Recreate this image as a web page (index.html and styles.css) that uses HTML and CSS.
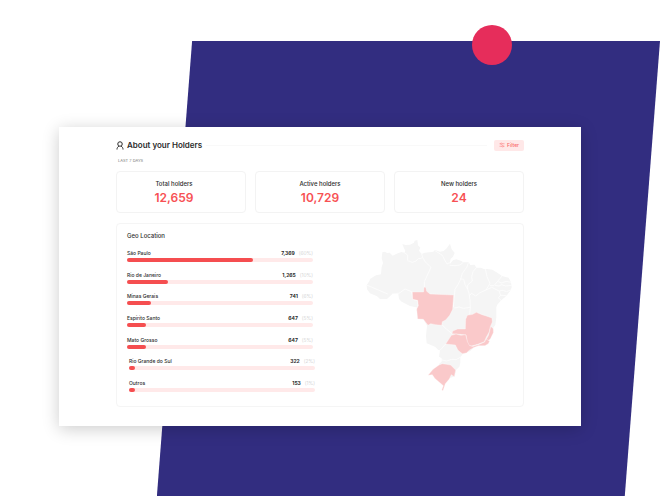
FILE: index.html
```html
<!DOCTYPE html>
<html lang="en">
<head>
    <meta charset="UTF-8">
    <meta name="viewport" content="width=device-width, initial-scale=1.0">
    <title>About your Holders</title>
    <link rel="stylesheet" href="styles.css">
</head>
<body>
    <main class="hero">
        <div class="shape"></div>
        <div class="dot"></div>
        <section class="panel">
            <header class="panel-header">
                <svg class="user-icon" viewBox="0 0 16 18" aria-hidden="true">
                    <circle cx="8" cy="6" r="4.5"/>
                    <path d="M2 17c0-3 1-5 4-7M14 17c0-3-1-5-4-7"/>
                </svg>
                <h1>About your Holders</h1>
                <span class="line"></span>
                <button type="button" class="filter">
                    <svg class="filter-icon" viewBox="0 0 12 12" aria-hidden="true">
                        <path d="M1 3.500h2M6 3.500h5M1 8.500h5M9 8.500h2"/>
                        <circle cx="4.500" cy="3.500" r="1.500"/>
                        <circle cx="7.500" cy="8.500" r="1.500"/>
                    </svg>
                    Filter
                </button>
            </header>
            <p class="period">LAST 7 DAYS</p>

            <div class="cards">
                <div class="card card-total">
                    <h2>Total holders</h2>
                    <strong>12,659</strong>
                </div>
                <div class="card">
                    <h2>Active holders</h2>
                    <strong>10,729</strong>
                </div>
                <div class="card">
                    <h2>New holders</h2>
                    <strong>24</strong>
                </div>
            </div>

            <div class="geo">
                <div class="geo-left">
                    <h2>Geo Location</h2>
                    <ul class="places">
                        <li>
                            <div class="place"><span class="name">São Paulo</span><b>7,369</b><span class="percent">(60%)</span></div>
                            <div class="bar"><div class="fill" style="width: 68%"></div></div>
                        </li>
                        <li>
                            <div class="place"><span class="name">Rio de Janeiro</span><b>1,265</b><span class="percent">(10%)</span></div>
                            <div class="bar"><div class="fill" style="width: 22%"></div></div>
                        </li>
                        <li>
                            <div class="place"><span class="name">Minas Gerais</span><b>741</b><span class="percent">(6%)</span></div>
                            <div class="bar"><div class="fill" style="width: 13%"></div></div>
                        </li>
                        <li>
                            <div class="place"><span class="name">Espírito Santo</span><b>647</b><span class="percent">(5%)</span></div>
                            <div class="bar"><div class="fill" style="width: 10%"></div></div>
                        </li>
                        <li>
                            <div class="place"><span class="name">Mato Grosso</span><b>647</b><span class="percent">(5%)</span></div>
                            <div class="bar"><div class="fill" style="width: 10%"></div></div>
                        </li>
                        <li class="minor">
                            <div class="place"><span class="name">Rio Grande do Sul</span><b>322</b><span class="percent">(2%)</span></div>
                            <div class="bar"><div class="fill" style="width: 3%"></div></div>
                        </li>
                        <li class="minor">
                            <div class="place"><span class="name">Outros</span><b>153</b><span class="percent">(1%)</span></div>
                            <div class="bar"><div class="fill" style="width: 3%"></div></div>
                        </li>
                    </ul>
                </div>
                <svg class="map" viewBox="9 6 480 480" role="img" aria-label="Map of Brazil">
                    <path class="country" d="M82 67L90 65 96 69 104 68 113 77 125 71 139 66 148 68 151 62 147 55 142 42 151 45 165 44 177 38 179 32 187 30 189 46 196 53 192 62 200 72 209 68 223 67 235 65 240 60 255 65 266 63 275 55 285 41 290 58 299 69 294 80 287 86 284 103 294 91 304 88 319 93 325 97 341 97 346 105 359 104 364 113 377 113 389 118 397 117 412 119 427 128 441 138 461 143 468 157 470 172 466 182 455 197 437 212 427 224 424 232 424 262 421 285 414 295 415 307 409 318 403 322 398 335 389 346 370 347 358 352 345 364 324 371 316 382 316 398 313 410 303 420 300 438 286 444 262 420 252 402 260 395 260 385 252 380 255 361 250 360 240 350 215 340 213 318 216 287 205 268 188 267 185 240 190 233 165 228 140 215 132 207 130 192 112 192 96 207 75 207 66 199 45 190 36 178 35 165 43 154 45 147 63 136 78 133 80 111 84 99 80 85z"/>
                    <g class="borders">
                        <!-- north -->
                        <path d="M148 68L158 75 158 92 172 97 183 93 190 86 198 85 203 82 200 72"/>
                        <path d="M203 82L210 95 228 112 208 155 208 172"/>
                        <path d="M35 165L98 192"/>
                        <path d="M112 192L132 190 150 177 170 185 173 208 188 211 190 233"/>
                        <path d="M240 62L262 76 269 90 276 102 284 98"/>
                        <path d="M284 106L300 107 315 105 325 97"/>
                        <path d="M341 97L335 112 322 130 317 147 310 162 300 178 298 196 295 232"/>
                        <!-- northeast -->
                        <path d="M317 147L326 148 330 163 338 178 342 190 345 210 346 232"/>
                        <path d="M364 113L354 125 350 140 352 153 338 165 338 178"/>
                        <path d="M391 117L396 140 405 160 393 180 375 188 362 198 350 190 343 197"/>
                        <path d="M405 167L417 167 427 155 441 138"/>
                        <path d="M430 155L440 159 453 154 468 157"/>
                        <path d="M420 166L432 168 440 164 452 168 470 166"/>
                        <path d="M393 180L410 172 432 183 445 181 454 185 467 180"/>
                        <path d="M432 183L437 196 455 197M437 196L430 203 440 213"/>
                        <!-- centre and south -->
                        <path d="M298 234L312 231 325 235 346 232 344 255 334 266"/>
                        <path d="M262 285L275 298 290 310"/>
                        <path d="M255 361L272 342"/>
                        <path d="M256 389L275 393 290 388 303 389 316 382"/>
                    </g>
                    <!-- states with holders -->
                    <g class="active">
                        <path d="M172 186L206 186 207 172 212 172 215 184 225 192 296 195 293 238 284 256 272 270 262 275 260 286 242 284 227 281 219 286 213 278 205 268 188 267 185 237 190 227 188 211 173 208z"/>
                        <path d="M332 268L337 256 353 253 364 247 381 254 391 257 411 264 412 276 406 290 403 305 394 321 388 335 368 343 350 348 338 345 333 315 315 313 291 311 293 303 308 297 331 297z"/>
                        <path d="M407 289L415 296 415 308 406 327 401 331 392 331 400 317 404 304z"/>
                        <path d="M347 350L370 344 389 336 393 327 404 333 400 341 390 347 371 347 358 352z"/>
                        <path d="M272 342L289 316 303 312 318 316 332 314 337 334 343 346 358 352 344 360 334 369 322 371 309 361 301 345z"/>
                        <path d="M219 436L234 418 252 405 262 401 274 403 287 405 302 420 298 440 289 434 283 447 271 461 264 482 260 480 265 467 252 456 239 445 232 434z"/>
                    </g>
                </svg>
            </div>
        </section>
    </main>
</body>
</html>
```
FILE: styles.css
```css
* {
    box-sizing: border-box;
}
body {
    margin: 0;
    background: #fff;
    color: #2b2b2b;
    font-family: "Inter", "Liberation Sans", sans-serif;
}
h1, h2, p, ul {
    margin: 0;
    padding: 0;
}
.hero {
    position: relative;
    min-height: 100vh;
    padding: 127px 81px 70px 59px;
    overflow: hidden;
}

/* decoration behind the panel */
.shape {
    position: absolute;
    top: 41px;
    right: 2px;
    bottom: 0;
    width: 76%;
    background: #322d80;
    clip-path: polygon(7% 0, 100% 0, 93% 100%, 0 100%);
}
.dot {
    position: absolute;
    top: 25px;
    right: 150px;
    width: 40px;
    height: 40px;
    border-radius: 50%;
    background: #e62d5b;
}

.panel {
    position: relative;
    padding: 12px 57px 19px;
    background: #fff;
    box-shadow: 0 3px 16px rgba(0, 0, 0, 0.2);
}
.panel-header {
    display: flex;
    align-items: center;
    height: 12px;
}
.user-icon {
    width: 8px;
    height: 9px;
    margin-right: 3px;
    fill: none;
    stroke: #2b2b2b;
    stroke-width: 2;
}
h1 {
    font-size: 8px;
    line-height: 12px;
    font-weight: 600;
}
.line {
    flex: 1;
    height: 1px;
    margin: 0 7px 0 4px;
    background: #f9f9f9;
}
.filter {
    display: flex;
    align-items: center;
    justify-content: center;
    gap: 2px;
    width: 30px;
    height: 11px;
    padding: 0;
    border: 0;
    border-radius: 2px;
    background: #ffe8e8;
    color: #f9696b;
    font-family: inherit;
    font-size: 5px;
    font-weight: 500;
}
.filter-icon {
    width: 6px;
    height: 6px;
    fill: none;
    stroke: #f9696b;
}
.period {
    margin: 7px 0 7px 2px;
    font-size: 4px;
    line-height: 6px;
    color: #777;
}

.cards {
    display: grid;
    grid-template-columns: repeat(3, 1fr);
    gap: 9px;
}
.card {
    padding: 7px 0 6px;
    border: 1px solid #f3f3f3;
    border-radius: 4px;
    text-align: center;
}
.card-total {
    padding-right: 14px;
}
.card h2 {
    font-size: 6px;
    line-height: 10px;
    font-weight: 500;
}
.card strong {
    display: block;
    font-size: 12px;
    line-height: 17px;
    font-weight: 600;
    color: #f75154;
}

.geo {
    display: grid;
    grid-template-columns: 1fr 160px;
    gap: 45px;
    margin-top: 10px;
    padding: 8px 5px 14px 10px;
    border: 1px solid #f5f5f5;
    border-radius: 4px;
}
.geo-left {
    display: flex;
    flex-direction: column;
}
.geo h2 {
    font-size: 6px;
    line-height: 8px;
    font-weight: 500;
}
.places {
    display: flex;
    flex: 1;
    flex-direction: column;
    justify-content: space-between;
    margin-top: 9px;
    list-style: none;
}
.minor {
    margin: 0 -2px 0 2px;
}
.place {
    display: flex;
    gap: 4px;
    margin-bottom: 1px;
    font-size: 5px;
    line-height: 8px;
    font-weight: 500;
}
.name {
    flex: 1;
}
.place b {
    font-weight: 700;
}
.percent {
    color: #c8c8c8;
    font-weight: 300;
}
.bar {
    height: 4px;
    border-radius: 2px;
    background: #ffe9e9;
}
.fill {
    height: 4px;
    border-radius: 2px;
    background: #f54e50;
}

.map {
    width: 160px;
    height: 160px;
    stroke-linejoin: round;
}
.country {
    fill: #f5f5f5;
}
.borders {
    fill: none;
    stroke: #fff;
    stroke-width: 2;
}
.active {
    fill: #fac9ca;
    stroke: #fff;
    stroke-width: 1;
}
```
